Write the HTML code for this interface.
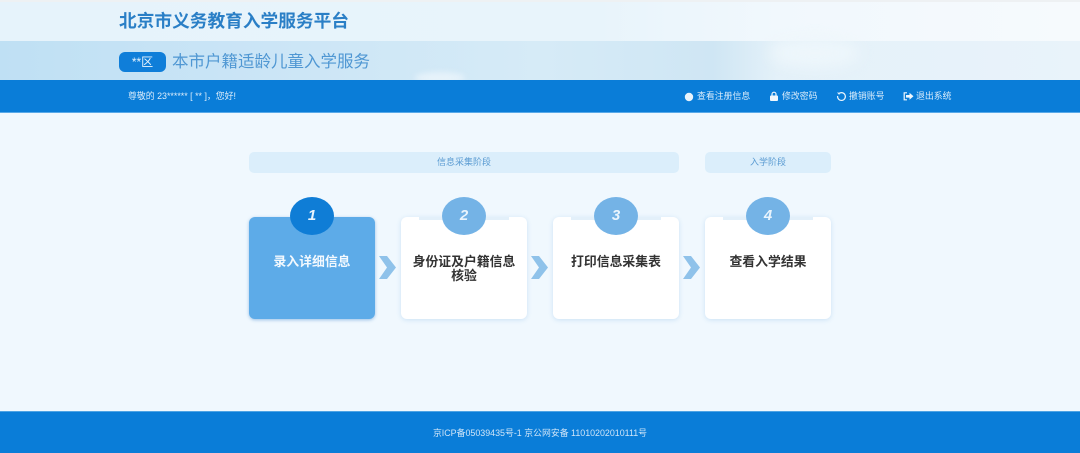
<!DOCTYPE html>
<html lang="zh"><head><meta charset="utf-8"><title>北京市义务教育入学服务平台</title>
<style>
*{margin:0;padding:0;box-sizing:border-box}
html,body{width:1080px;height:453px;overflow:hidden;background:#f0f8fe;font-family:"Liberation Sans","Noto Sans CJK SC",sans-serif}
.a{position:absolute;white-space:nowrap}
.card{position:absolute;top:217px;width:126px;height:102px;background:#fff;border-radius:6px;box-shadow:0 1px 5px rgba(120,175,225,.3);text-align:center;font-size:12.85px;font-weight:700;color:#333;line-height:14px;padding-top:38px}
.tab{position:absolute;top:217px;height:3px;width:90px;background:#e3f0fa}
.c{position:absolute;top:197px;width:44px;height:38px;border-radius:50%;background:#74b3e6;color:#e9f4fd;text-align:center;font:italic 700 15px/38px "Liberation Sans",sans-serif}
.bar{position:absolute;top:152px;height:21px;background:#dbeefb;border-radius:5px;text-align:center;font-size:9px;line-height:21px;color:#5a9bd2}
.ar{position:absolute;top:256px}
.n{position:absolute;top:91px;font-size:8.9px;line-height:11px;color:#dcedfb;white-space:nowrap}
.t{filter:blur(.35px)}
</style></head><body>
<div class="a" style="left:0;top:0;width:1080px;height:41px;background:linear-gradient(90deg,#e6f3fb 0,#e8f4fb 55%,#f1f8fd 72%,#f6fafd 100%)"></div>
<div class="a" style="left:0;top:0;width:1080px;height:2px;background:#eef1f3"></div>
<div class="a" style="left:0;top:41px;width:1080px;height:39px;background:linear-gradient(90deg,#bfe0f4 0,#cbe5f6 25%,#d6ebf7 50%,#cfe6f4 66%,#e4f1f9 72%,#e9f3fa 100%)"></div>
<div class="a" style="left:770px;top:38px;width:90px;height:30px;background:#edf6fb;border-radius:50%;filter:blur(7px)"></div>
<div class="a" style="left:415px;top:72px;width:50px;height:12px;background:#e6f2fa;border-radius:50%;filter:blur(3px)"></div>
<div class="a t" style="left:119px;top:11px;font-size:17.7px;line-height:20px;font-weight:700;color:#2a7fc6">北京市义务教育入学服务平台</div>
<div class="a" style="left:119px;top:52px;width:47px;height:20px;border-radius:6px;background:#0f7ed9"></div>
<div class="a t" style="left:119px;top:52px;width:47px;color:#e6f3fd;font-size:12px;line-height:20px;text-align:center">**区</div>
<div class="a t" style="left:172px;top:52px;font-size:16.5px;line-height:20px;color:#4f97d3">本市户籍适龄儿童入学服务</div>

<div class="a" style="left:0;top:80px;width:1080px;height:33px;background:#0a7dd8;border-bottom:1px solid #59a9e8"></div>
<div class="n t" style="left:128px">尊敬的 23****** [ ** ]，您好!</div>
<svg class="a" style="left:684px;top:92px" width="10" height="10"><circle cx="5" cy="5" r="4.2" fill="#e8f3fc"/></svg>
<div class="n t" style="left:697px">查看注册信息</div>
<svg class="a" style="left:769px;top:91px" width="10" height="11"><rect x="1" y="4.5" width="8" height="5.5" rx="1" fill="#f0f7fd"/><path d="M3 5V3.2a2 2 0 0 1 4 0V5" stroke="#f0f7fd" stroke-width="1.2" fill="none"/></svg>
<div class="n t" style="left:782px">修改密码</div>
<svg class="a" style="left:836px;top:91px" width="11" height="11"><path d="M3 2.5A3.9 3.9 0 1 1 1.6 5" stroke="#e8f3fc" stroke-width="1.2" fill="none"/><path d="M1 1.5L4 1.7 3.2 4z" fill="#e8f3fc"/></svg>
<div class="n t" style="left:849px">撤销账号</div>
<svg class="a" style="left:903px;top:92px" width="11" height="9"><path d="M4 .8H1.2v7H4" stroke="#f0f7fd" stroke-width="1.2" fill="none"/><path d="M3 3h3.5V.8L10.5 4.3 6.500 7.8V5.600H3z" fill="#f0f7fd"/></svg>
<div class="n t" style="left:916px">退出系统</div>

<div class="bar" style="left:249px;width:430px"><span class="t" style="display:inline-block">信息采集阶段</span></div>
<div class="bar" style="left:705px;width:126px"><span class="t" style="display:inline-block">入学阶段</span></div>

<div class="card" style="left:249px;background:#5dabe8;color:#f3f9fe;box-shadow:0 1px 3px rgba(70,140,210,.5)"><span class="t" style="display:inline-block">录入详细信息</span></div>
<div class="card" style="left:401px"><span class="t" style="display:inline-block">身份证及户籍信息<br>核验</span></div>
<div class="card" style="left:553px"><span class="t" style="display:inline-block">打印信息采集表</span></div>
<div class="card" style="left:705px"><span class="t" style="display:inline-block">查看入学结果</span></div>
<div class="tab" style="left:419px"></div>
<div class="tab" style="left:571px"></div>
<div class="tab" style="left:723px"></div>
<div class="c" style="left:290px;background:#0f7dd6">1</div>
<div class="c" style="left:442px">2</div>
<div class="c" style="left:594px">3</div>
<div class="c" style="left:746px">4</div>
<svg class="ar" style="left:379px" width="18" height="24"><path d="M0 0H8L17 11.500 8 23H0L8 11.500z" fill="#8fc2ea"/></svg>
<svg class="ar" style="left:531px" width="18" height="24"><path d="M0 0H8L17 11.500 8 23H0L8 11.500z" fill="#8fc2ea"/></svg>
<svg class="ar" style="left:683px" width="18" height="24"><path d="M0 0H8L17 11.500 8 23H0L8 11.500z" fill="#8fc2ea"/></svg>

<div class="a" style="left:0;top:411px;width:1080px;height:42px;background:#0a7dd8;border-top:1px solid #4ea3e4"></div>
<div class="a t" style="left:0;top:427px;width:1080px;text-align:center;font-size:8.9px;line-height:12px;color:#cfe5f8">京ICP备05039435号-1 京公网安备 11010202010111号</div>
</body></html>
